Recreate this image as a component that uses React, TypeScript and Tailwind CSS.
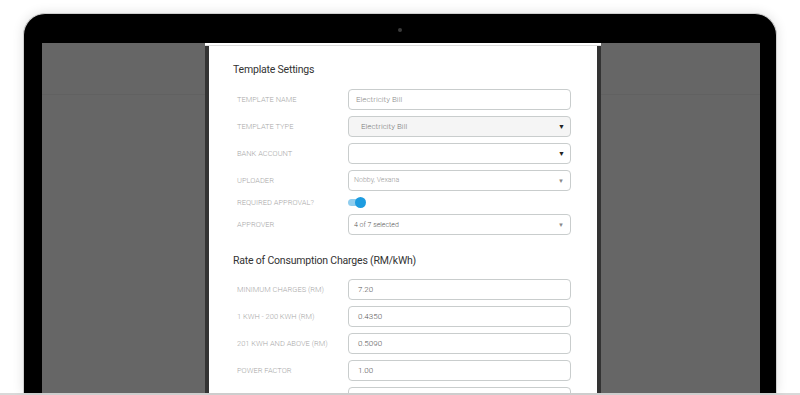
import { ReactNode } from "react";

const font = { fontFamily: "Roboto, 'Liberation Sans', sans-serif" };

const Arrow = ({ small }: { small?: boolean }) =>
  small ? (
    <span className="absolute right-[6px] top-[5px] text-[6px] text-[#888]">▼</span>
  ) : (
    <span className="absolute right-[5px] top-[5px] text-[7px] text-[#222]">▼</span>
  );

const Field = ({
  value,
  select,
  grey,
  smallArrow,
  textClass = "text-[8px] text-[#8a8a8a] pl-[7px]",
}: {
  value?: string;
  select?: boolean;
  grey?: boolean;
  smallArrow?: boolean;
  textClass?: string;
}) => (
  <div
    className={`relative h-[21px] rounded-[4px] border border-[#c9cdcd] flex items-center ${
      grey ? "bg-[#f5f5f5]" : "bg-white"
    }`}
  >
    <span className={`font-light ${textClass}`}>{value}</span>
    {select && <Arrow small={smallArrow} />}
  </div>
);

const Row = ({ label, children }: { label: string; children: ReactNode }) => (
  <div className="grid grid-cols-[111px_223px] items-center">
    <div className="text-[7.5px] font-light text-[#a8a8a8] uppercase">{label}</div>
    {children}
  </div>
);

const Heading = ({ children }: { children: ReactNode }) => (
  <div className="text-[10.5px] leading-[14px] tracking-[-0.2px] text-[#333] -ml-[4px]">{children}</div>
);

export default function App() {
  return (
    <div className="w-[800px] h-[395px] bg-white overflow-hidden flex flex-col" style={font}>
      <div className="flex-1 min-h-0 pt-[13px] px-[23px]">
        <div className="relative h-full rounded-t-[22px] bg-black border border-b-0 border-[#cfcfcf] pt-[29px] pl-[18px] pr-[16px] shadow-[0_0_12px_rgba(0,0,0,0.12)]">
          <div className="absolute left-[374px] top-[14px] w-[4px] h-[4px] rounded-full bg-[#3a3a3a]" />
          <div className="h-full bg-[#666666] flex">
            <div className="w-[163px] border-t border-[#616161] mt-[51px]" />
            <div className="w-[396px] flex flex-col">
              <div className="h-[3px] bg-white border-b border-[#dcdcdc]" />
              <div className="flex-1 min-h-0 flex border-x-4 border-[#333]">
                <div className="flex-1 bg-white pt-[17px] pl-[28px] flex flex-col overflow-hidden">
                  <Heading>Template Settings</Heading>
                  <div className="mt-[12px] flex flex-col gap-[6px]">
                    <Row label="Template Name">
                      <Field value="Electricity Bill" />
                    </Row>
                    <Row label="Template Type">
                      <Field value="Electricity Bill" select grey textClass="text-[8px] text-[#7a7a7a] pl-[12px]" />
                    </Row>
                    <Row label="Bank Account">
                      <Field select />
                    </Row>
                    <Row label="Uploader">
                      <Field value="Nobby, Vexana" select smallArrow textClass="text-[7px] text-[#999] pl-[5px]" />
                    </Row>
                    <Row label="Required Approval?">
                      <div className="h-[11px] flex items-center">
                        <div className="relative w-[17px] h-[7px] rounded-full bg-[#8fcdee]">
                          <div className="absolute -right-[1px] -top-[2px] w-[11px] h-[11px] rounded-full bg-[#1d9ce0]" />
                        </div>
                      </div>
                    </Row>
                    <Row label="Approver">
                      <Field value="4 of 7 selected" select smallArrow textClass="text-[7px] text-[#555] pl-[5px]" />
                    </Row>
                  </div>
                  <div className="mt-[19px]">
                    <Heading>Rate of Consumption Charges (RM/kWh)</Heading>
                  </div>
                  <div className="mt-[11px] flex flex-col gap-[6px]">
                    <Row label="Minimum Charges (RM)">
                      <Field value="7.20" textClass="text-[8px] text-[#555] pl-[9px]" />
                    </Row>
                    <Row label="1 kWh - 200 kWh (RM)">
                      <Field value="0.4350" textClass="text-[8px] text-[#555] pl-[9px]" />
                    </Row>
                    <Row label="201 kWh and above (RM)">
                      <Field value="0.5090" textClass="text-[8px] text-[#555] pl-[9px]" />
                    </Row>
                    <Row label="Power Factor">
                      <Field value="1.00" textClass="text-[8px] text-[#555] pl-[9px]" />
                    </Row>
                    <Row label="">
                      <Field />
                    </Row>
                  </div>
                </div>
              </div>
            </div>
            <div className="flex-1 border-t border-[#616161] mt-[51px]" />
          </div>
        </div>
      </div>
      <div className="h-[2px] bg-[#d9d9d9]" />
    </div>
  );
}
